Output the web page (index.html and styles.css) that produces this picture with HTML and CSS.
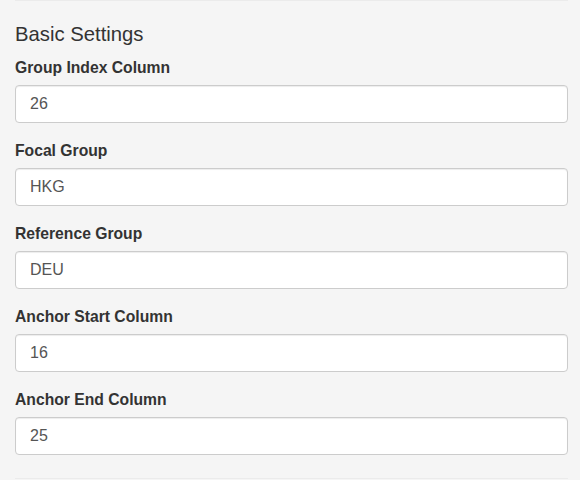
FILE: index.html
```html
<!DOCTYPE html>
<html>
<head>
<meta charset="utf-8">
<link rel="stylesheet" href="styles.css">
</head>
<body>
<div class="panel">
  <div class="rule"></div>
  <h4 class="title">Basic Settings</h4>
  <div class="group">
    <label class="field-label" for="f1">Group Index Column</label>
    <input class="field" id="f1" type="text" value="26">
  </div>
  <div class="group">
    <label class="field-label" for="f2">Focal Group</label>
    <input class="field" id="f2" type="text" value="HKG">
  </div>
  <div class="group">
    <label class="field-label" for="f3">Reference Group</label>
    <input class="field" id="f3" type="text" value="DEU">
  </div>
  <div class="group">
    <label class="field-label" for="f4">Anchor Start Column</label>
    <input class="field" id="f4" type="text" value="16">
  </div>
  <div class="group">
    <label class="field-label" for="f5">Anchor End Column</label>
    <input class="field" id="f5" type="text" value="25">
  </div>
  <div class="rule rule-bottom"></div>
</div>
</body>
</html>
```
FILE: styles.css
```css
html, body {
  margin: 0;
  padding: 0;
  background: #f5f5f5;
}
body {
  font-family: "Liberation Sans", Arial, Helvetica, sans-serif;
  color: #333;
}
.panel {
  width: 553px;
  padding-left: 15px;
  display: flex;
  flex-direction: column;
}
.rule {
  height: 0;
  border-top: 1px solid #ebebeb;
}
.rule-bottom {
  margin-top: 6px;
}
.title {
  margin: 22px 0 12px 0;
  font-size: 20.3px;
  font-weight: 400;
  line-height: 22px;
  height: 22px;
}
.group {
  display: flex;
  flex-direction: column;
  margin-bottom: 17px;
}
.field-label {
  font-size: 15.7px;
  font-weight: 700;
  line-height: 22px;
  margin-bottom: 6px;
}
.field {
  box-sizing: border-box;
  height: 38px;
  width: 100%;
  margin: 0;
  padding: 0 13px 0 14px;
  border: 1px solid #ccc;
  border-radius: 4px;
  background: #fff;
  font-family: "Liberation Sans", Arial, Helvetica, sans-serif;
  font-size: 16px;
  color: #555;
  box-shadow: inset 0 1px 1px rgba(0, 0, 0, 0.075);
  outline: none;
}
```
